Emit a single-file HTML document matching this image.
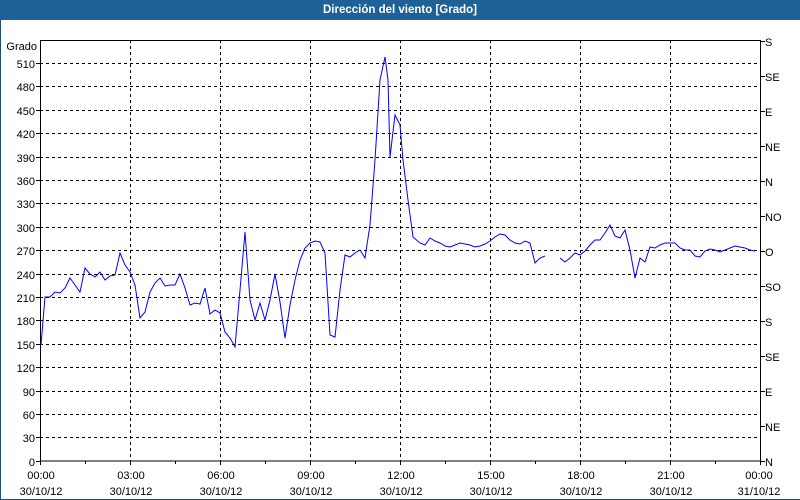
<!DOCTYPE html>
<html><head><meta charset="utf-8"><style>
html,body{margin:0;padding:0;background:#fff}
body{width:800px;height:500px;overflow:hidden;position:relative;font-family:"Liberation Sans",sans-serif}
#t{position:absolute;left:0;top:0;width:800px;height:20px;background:#1d6197;color:#fff;font-weight:bold;font-size:11.5px;text-align:center;line-height:20px;font-family:"Liberation Sans",sans-serif}
#f{position:absolute;left:0;top:20px;width:799px;height:479px;border-right:1px solid #1d4f7c;border-bottom:1px solid #1d4f7c;border-left:1px solid #1d4f7c}
svg{position:absolute;left:0;top:0}
text{font-family:"Liberation Sans",sans-serif;font-size:11px;fill:#000}
</style></head><body>
<div id="t">Dirección del viento [Grado]</div>
<div id="f"></div>
<svg width="800" height="500" xmlns="http://www.w3.org/2000/svg">
<g stroke="#000" stroke-dasharray="3,3" stroke-width="1">
<line x1="40" x2="761" y1="63.5" y2="63.5"/><line x1="40" x2="761" y1="86.5" y2="86.5"/><line x1="40" x2="761" y1="110.5" y2="110.5"/><line x1="40" x2="761" y1="133.5" y2="133.5"/><line x1="40" x2="761" y1="157.5" y2="157.5"/><line x1="40" x2="761" y1="180.5" y2="180.5"/><line x1="40" x2="761" y1="203.5" y2="203.5"/><line x1="40" x2="761" y1="227.5" y2="227.5"/><line x1="40" x2="761" y1="250.5" y2="250.5"/><line x1="40" x2="761" y1="274.5" y2="274.5"/><line x1="40" x2="761" y1="297.5" y2="297.5"/><line x1="40" x2="761" y1="320.5" y2="320.5"/><line x1="40" x2="761" y1="344.5" y2="344.5"/><line x1="40" x2="761" y1="367.5" y2="367.5"/><line x1="40" x2="761" y1="391.5" y2="391.5"/><line x1="40" x2="761" y1="414.5" y2="414.5"/><line x1="40" x2="761" y1="437.5" y2="437.5"/>
<line x1="130.5" x2="130.5" y1="40" y2="461"/><line x1="220.5" x2="220.5" y1="40" y2="461"/><line x1="310.5" x2="310.5" y1="40" y2="461"/><line x1="400.5" x2="400.5" y1="40" y2="461"/><line x1="490.5" x2="490.5" y1="40" y2="461"/><line x1="580.5" x2="580.5" y1="40" y2="461"/><line x1="670.5" x2="670.5" y1="40" y2="461"/>
</g>
<rect x="40.5" y="40.5" width="720" height="420.5" fill="none" stroke="#000"/>
<g stroke="#000">
<path d="M130.5 461v4M220.5 461v4M310.5 461v4M400.5 461v4M490.5 461v4M580.5 461v4M670.5 461v4M760.5 461v4M40.5 461v4M85.5 461v3M175.5 461v3M265.5 461v3M355.5 461v3M445.5 461v3M535.5 461v3M625.5 461v3M715.5 461v3
M36 461.5h4M36 437.5h4M36 414.5h4M36 391.5h4M36 367.5h4M36 344.5h4M36 320.5h4M36 297.5h4M36 274.5h4M36 250.5h4M36 227.5h4M36 203.5h4M36 180.5h4M36 157.5h4M36 133.5h4M36 110.5h4M36 86.5h4M36 63.5h4
M761 41.5h4M761 76.5h4M761 111.5h4M761 146.5h4M761 181.5h4M761 216.5h4M761 251.5h4M761 286.5h4M761 321.5h4M761 356.5h4M761 391.5h4M761 426.5h4M761 461.5h4"/>
</g>
<g text-anchor="end">
<text x="37" y="50">Grado</text>
<text x="35" y="68">510</text><text x="35" y="91">480</text><text x="35" y="115">450</text><text x="35" y="138">420</text><text x="35" y="162">390</text><text x="35" y="185">360</text><text x="35" y="208">330</text><text x="35" y="232">300</text><text x="35" y="255">270</text><text x="35" y="279">240</text><text x="35" y="302">210</text><text x="35" y="325">180</text><text x="35" y="349">150</text><text x="35" y="372">120</text><text x="35" y="396">90</text><text x="35" y="419">60</text><text x="35" y="442">30</text><text x="35" y="466">0</text>
</g>
<g>
<text x="765" y="46">S</text><text x="765" y="81">SE</text><text x="765" y="116">E</text><text x="765" y="151">NE</text><text x="765" y="186">N</text><text x="765" y="221">NO</text><text x="765" y="256">O</text><text x="765" y="291">SO</text><text x="765" y="326">S</text><text x="765" y="361">SE</text><text x="765" y="396">E</text><text x="765" y="431">NE</text><text x="765" y="466">N</text>
</g>
<g text-anchor="middle">
<text x="41" y="479">00:00</text><text x="41" y="495">30/10/12</text>
<text x="131" y="479">03:00</text><text x="131" y="495">30/10/12</text>
<text x="221" y="479">06:00</text><text x="221" y="495">30/10/12</text>
<text x="311" y="479">09:00</text><text x="311" y="495">30/10/12</text>
<text x="401" y="479">12:00</text><text x="401" y="495">30/10/12</text>
<text x="491" y="479">15:00</text><text x="491" y="495">30/10/12</text>
<text x="581" y="479">18:00</text><text x="581" y="495">30/10/12</text>
<text x="671" y="479">21:00</text><text x="671" y="495">30/10/12</text>
<text x="759" y="479">00:00</text><text x="759" y="495">31/10/12</text>
</g>
<polyline fill="none" stroke="#0000ff" stroke-width="1" points="41,345 45,297 50,297 55,292 60,293 65,288 70,278 75,285 80,292 85,268 90,274 95,277 100,272 105,280 110,276 115,275 120,253 125,265 130,272 135,285 140,318 145,312 150,292 155,283 160,278 165,286 170,285 175,285 180,274 185,288 190,305 195,303 200,304 205,288 210,314 215,310 220,313 225,332 230,338 235,347 240,290 245,232 250,300 255,320 260,303 265,320 270,300 275,274 280,302 285,338 290,305 295,280 300,260 305,248 310,243 315,241 320,242 325,253 330,335 335,337 340,290 345,255 350,257 355,253 360,250 365,258 370,225 375,160 380,80 385,57 388,80 390,157 395,115 400,125 403,160 408,200 413,237 420,243 425,245 430,238 435,241 440,243 445,246 450,247 455,245 460,243 465,244 470,245 475,247 480,246 485,244 490,241 495,237 500,234 505,235 510,240 515,243 520,244 525,241 530,243 535,263 540,258 545,256"/>
<polyline fill="none" stroke="#0000ff" stroke-width="1" points="560,258 565,262 570,258 575,253 580,255 585,251 590,245 595,240 600,240 605,233 610,225 615,236 620,238 625,230 630,250 635,278 640,258 645,262 650,247 655,248 660,245 665,243 670,243 675,243 680,248 685,250 690,250 695,256 700,257 705,251 710,249 715,250 720,252 725,250 730,248 735,246 740,247 745,248 750,250 755,251"/>
</svg>
</body></html>
